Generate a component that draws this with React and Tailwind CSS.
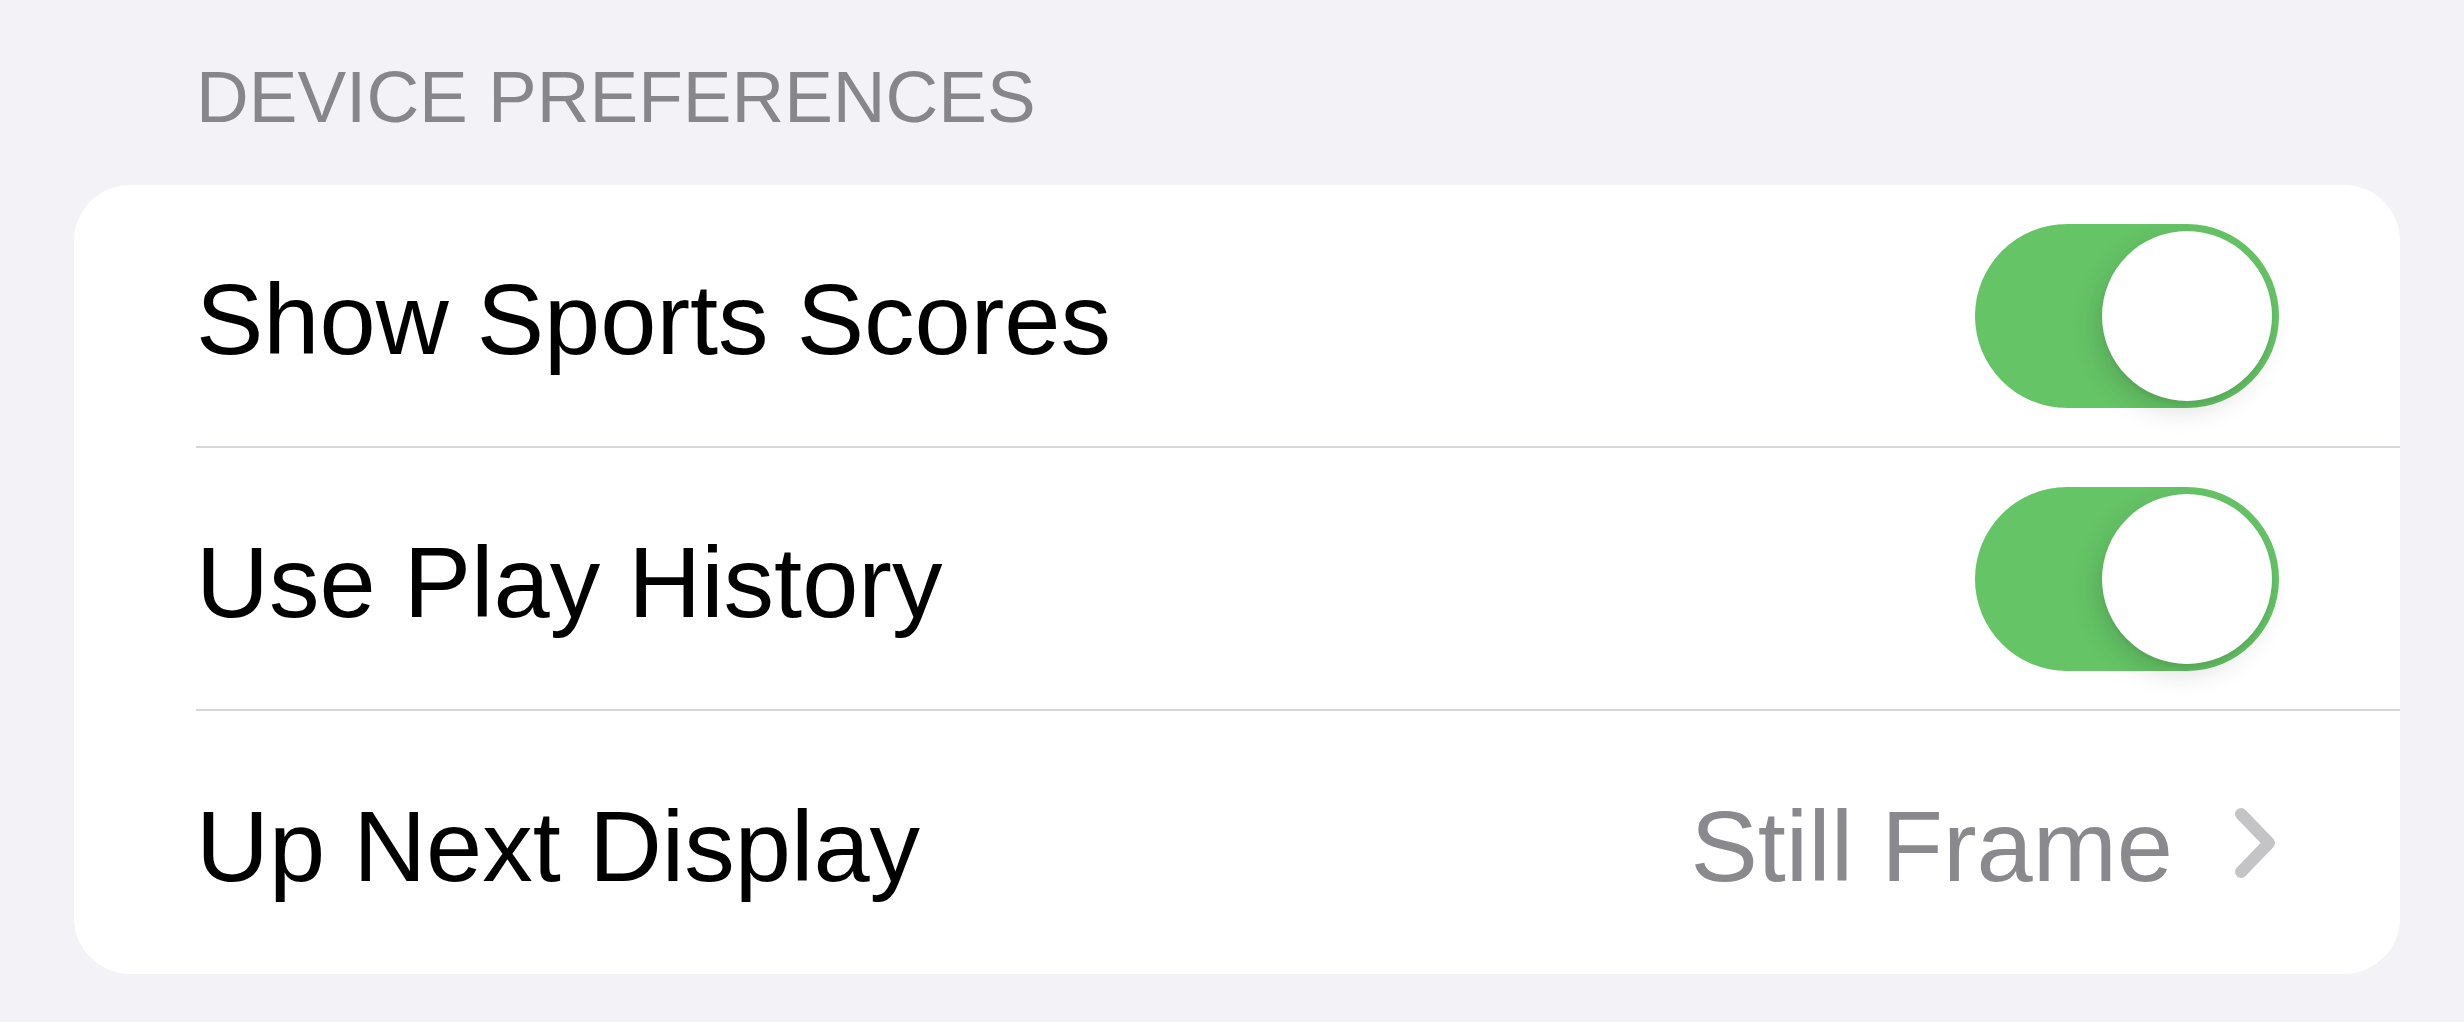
import React from 'react';

const font = { fontFamily: '"Liberation Sans", Arial, sans-serif' };

function Toggle() {
  return (
    <div className="flex h-[184px] w-[304px] shrink-0 items-center justify-end rounded-full bg-[#65c466] p-[7px]">
      <div className="h-[170px] w-[170px] rounded-full bg-white shadow-[-6px_10px_26px_rgba(0,0,0,0.13),0_4px_4px_rgba(0,0,0,0.05)]" />
    </div>
  );
}

function Chevron() {
  return (
    <svg width="44" height="74" viewBox="0 0 44 74" aria-hidden="true">
      <path
        d="M8 8 L36 37 L8 66"
        fill="none"
        stroke="#c4c4c7"
        strokeWidth="12"
        strokeLinecap="round"
        strokeLinejoin="round"
      />
    </svg>
  );
}

function Row({ label, last, children }) {
  return (
    <div className="flex h-[263px] pl-[122px]">
      <div
        className={
          last
            ? 'flex flex-1 items-center justify-between pr-[121px]'
            : 'flex flex-1 items-center justify-between border-b-[2px] border-[#d6d6da] pr-[121px]'
        }
      >
        <span className="pt-[8px] text-[101px] leading-none text-black">{label}</span>
        {children}
      </div>
    </div>
  );
}

export default function App() {
  return (
    <div className="h-[1022px] w-full overflow-hidden bg-[#f2f2f7]" style={font}>
      <div className="pt-[60px] pl-[196px] text-[73px] leading-none text-[#86868b]">
        DEVICE PREFERENCES
      </div>
      <div className="mt-[52px] ml-[74px] w-[2326px] overflow-hidden rounded-[56px] bg-white">
        <Row label="Show Sports Scores">
          <Toggle />
        </Row>
        <Row label="Use Play History">
          <Toggle />
        </Row>
        <Row label="Up Next Display" last>
          <div className="flex items-center gap-[60px] pr-[2px]">
            <span className="pt-[8px] text-[101px] leading-none text-[#8a8a8e]">Still Frame</span>
            <Chevron />
          </div>
        </Row>
      </div>
    </div>
  );
}
